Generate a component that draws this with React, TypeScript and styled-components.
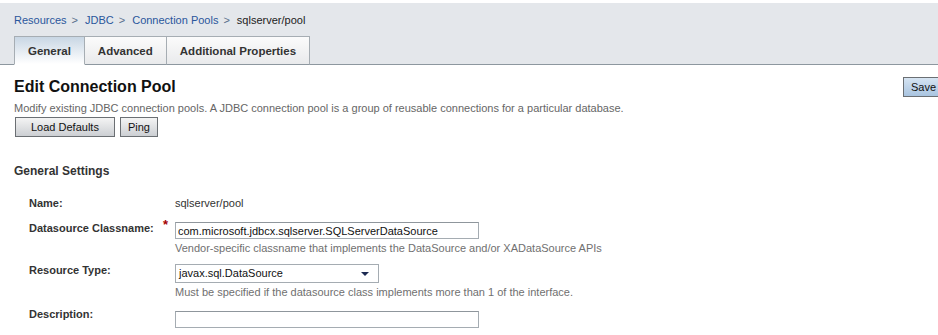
import React from 'react';
import styled, { createGlobalStyle } from 'styled-components';

const GlobalStyle = createGlobalStyle`
  html, body {
    margin: 0;
    padding: 0;
    background: #ffffff;
    overflow: hidden;
  }
  body {
    font-family: "Liberation Sans", Arial, sans-serif;
    font-size: 11px;
    color: #333333;
  }
`;

const Page = styled.div`
  width: 950px;
  padding-top: 3px;
`;

const Masthead = styled.div`
  background: #e4e7eb;
  border-bottom: 1px solid #8d979f;
  padding-left: 14px;
`;

const Breadcrumbs = styled.div`
  height: 33px;
  display: flex;
  align-items: center;
  font-size: 11px;
`;

const Crumb = styled.a`
  color: #2a569c;
  text-decoration: none;
`;

const Sep = styled.span`
  color: #5a6f8c;
  margin: 0 7px 0 5px;
`;

const Current = styled.span`
  color: #222222;
`;

const TabRow = styled.div`
  display: flex;
  height: 29px;
  margin-bottom: -1px;
`;

const Tab = styled.div<{ $active?: boolean }>`
  display: flex;
  align-items: center;
  padding: 0 13px;
  font-size: 11.5px;
  font-weight: bold;
  color: #333333;
  border: 1px solid #a6adb3;
  border-left-width: ${(p) => (p.$active ? '1px' : '0')};
  border-bottom: ${(p) => (p.$active ? '1px solid #ffffff' : '1px solid #8d979f')};
  background: ${(p) =>
    p.$active
      ? 'linear-gradient(#c8d6e4, #ffffff)'
      : 'linear-gradient(#fbfbfb, #e9eaec)'};
  cursor: pointer;
`;

const Content = styled.div`
  padding: 0 6px 0 14px;
`;

const TitleRow = styled.div`
  display: flex;
  justify-content: space-between;
  align-items: flex-start;
  margin-top: 12px;
`;

const Title = styled.h1`
  margin: 0;
  font-size: 16px;
  font-weight: bold;
  color: #111111;
  line-height: 19px;
`;

const Intro = styled.p`
  margin: 5px 0 0;
  color: #666666;
  line-height: 13px;
`;

const ButtonBar = styled.div`
  display: flex;
  gap: 5px;
  margin: 2px 0 0 1px;
`;

const Button = styled.button<{ $pad?: number; $primary?: boolean }>`
  height: 20px;
  padding: 0 ${(p) => p.$pad ?? 8}px;
  font-family: "Liberation Sans", Arial, sans-serif;
  font-size: 11px;
  color: #111111;
  border: 1px solid #6b6f73;
  background: ${(p) =>
    p.$primary
      ? 'linear-gradient(#d6e4f2, #a9c4e0)'
      : 'linear-gradient(#f4f4f4, #cccfd3)'};
  cursor: pointer;
`;

const SectionTitle = styled.h2`
  margin: 27px 0 0;
  font-size: 12px;
  font-weight: bold;
  color: #333333;
  line-height: 14px;
`;

const Form = styled.div`
  display: flex;
  flex-direction: column;
  padding-left: 15px;
  margin-top: 19px;
`;

const Row = styled.div<{ $gap: number }>`
  display: grid;
  grid-template-columns: 146px 1fr;
  align-items: start;
  margin-bottom: ${(p) => p.$gap}px;
`;

const Label = styled.div`
  position: relative;
  font-weight: bold;
  color: #333333;
  line-height: 13px;
`;

const Required = styled.span`
  position: absolute;
  left: 134px;
  top: -4px;
  color: #a40000;
  font-size: 13px;
  font-weight: bold;
`;

const Value = styled.div<{ $offset?: number }>`
  display: flex;
  flex-direction: column;
  line-height: 13px;
  color: #333333;
  padding-top: ${(p) => p.$offset ?? 0}px;
`;

const TextInput = styled.input<{ $w: number }>`
  box-sizing: border-box;
  width: ${(p) => p.$w}px;
  height: 17px;
  padding: 0 2px;
  font-family: "Liberation Sans", Arial, sans-serif;
  font-size: 11px;
  color: #111111;
  border: 1px solid #a5acb2;
  border-top-color: #8f969c;
  outline: none;
`;

const SelectBox = styled.div`
  box-sizing: border-box;
  width: 204px;
  height: 19px;
  display: flex;
  align-items: center;
  justify-content: space-between;
  padding: 0 9px 0 3px;
  border: 1px solid #a5acb2;
  background: #ffffff;
  font-size: 11px;
  color: #111111;
`;

const Caret = styled.span`
  width: 0;
  height: 0;
  border-left: 4px solid transparent;
  border-right: 4px solid transparent;
  border-top: 4px solid #1c2a52;
`;

const Help = styled.div`
  color: #707070;
  margin-top: 3px;
`;

export default function App() {
  return (
    <Page>
      <GlobalStyle />
      <Masthead>
        <Breadcrumbs>
          <Crumb href="#">Resources</Crumb>
          <Sep>&gt;</Sep>
          <Crumb href="#">JDBC</Crumb>
          <Sep>&gt;</Sep>
          <Crumb href="#">Connection Pools</Crumb>
          <Sep>&gt;</Sep>
          <Current>sqlserver/pool</Current>
        </Breadcrumbs>
        <TabRow>
          <Tab $active>General</Tab>
          <Tab>Advanced</Tab>
          <Tab>Additional Properties</Tab>
        </TabRow>
      </Masthead>

      <Content>
        <TitleRow>
          <Title>Edit Connection Pool</Title>
          <Button $primary $pad={7}>Save</Button>
        </TitleRow>
        <Intro>
          Modify existing JDBC connection pools. A JDBC connection pool is a group of reusable
          connections for a particular database.
        </Intro>
        <ButtonBar>
          <Button $pad={15}>Load Defaults</Button>
          <Button $pad={7}>Ping</Button>
        </ButtonBar>

        <SectionTitle>General Settings</SectionTitle>

        <Form>
          <Row $gap={12}>
            <Label>Name:</Label>
            <Value>sqlserver/pool</Value>
          </Row>
          <Row $gap={9}>
            <Label>
              Datasource Classname:
              <Required>*</Required>
            </Label>
            <Value>
              <TextInput $w={304} defaultValue="com.microsoft.jdbcx.sqlserver.SQLServerDataSource" />
              <Help>Vendor-specific classname that implements the DataSource and/or XADataSource APIs</Help>
            </Value>
          </Row>
          <Row $gap={9}>
            <Label>Resource Type:</Label>
            <Value>
              <SelectBox>
                javax.sql.DataSource
                <Caret />
              </SelectBox>
              <Help>Must be specified if the datasource class implements more than 1 of the interface.</Help>
            </Value>
          </Row>
          <Row $gap={0}>
            <Label>Description:</Label>
            <Value $offset={3}>
              <TextInput $w={304} defaultValue="" />
            </Value>
          </Row>
        </Form>
      </Content>
    </Page>
  );
}
